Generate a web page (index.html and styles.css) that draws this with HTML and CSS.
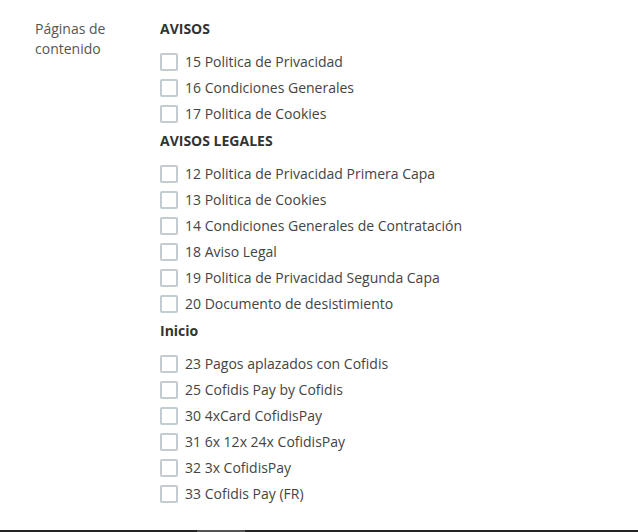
FILE: index.html
```html
<!DOCTYPE html>
<html lang="es">
<head>
<meta charset="utf-8">
<title>Páginas de contenido</title>
<link rel="stylesheet" href="styles.css">
</head>
<body>
<div class="page">
  <div class="field">
    <div class="field-label">Páginas de<br>contenido</div>
    <div class="field-body">
      <div class="group">
        <div class="group-title">AVISOS</div>
        <ul class="opts">
          <li class="opt"><span class="box"></span>15 Politica de Privacidad</li>
          <li class="opt"><span class="box"></span>16 Condiciones Generales</li>
          <li class="opt"><span class="box"></span>17 Politica de Cookies</li>
        </ul>
      </div>
      <div class="group">
        <div class="group-title">AVISOS LEGALES</div>
        <ul class="opts">
          <li class="opt"><span class="box"></span>12 Politica de Privacidad Primera Capa</li>
          <li class="opt"><span class="box"></span>13 Politica de Cookies</li>
          <li class="opt"><span class="box"></span>14 Condiciones Generales de Contratación</li>
          <li class="opt"><span class="box"></span>18 Aviso Legal</li>
          <li class="opt"><span class="box"></span>19 Politica de Privacidad Segunda Capa</li>
          <li class="opt"><span class="box"></span>20 Documento de desistimiento</li>
        </ul>
      </div>
      <div class="group">
        <div class="group-title">Inicio</div>
        <ul class="opts">
          <li class="opt"><span class="box"></span>23 Pagos aplazados con Cofidis</li>
          <li class="opt"><span class="box"></span>25 Cofidis Pay by Cofidis</li>
          <li class="opt"><span class="box"></span>30 4xCard CofidisPay</li>
          <li class="opt"><span class="box"></span>31 6x 12x 24x CofidisPay</li>
          <li class="opt"><span class="box"></span>32 3x CofidisPay</li>
          <li class="opt"><span class="box"></span>33 Cofidis Pay (FR)</li>
        </ul>
      </div>
    </div>
  </div>
</div>
<div class="bottombar"><div class="thumb"></div></div>
</body>
</html>
```

FILE: styles.css
```css
html, body {
  margin: 0;
  padding: 0;
  background: #fff;
}
body {
  font-family: "Open Sans", "Liberation Sans", sans-serif;
  font-size: 14px;
  color: #444;
  height: 532px;
  overflow: hidden;
  display: flex;
  flex-direction: column;
}
.page {
  flex: 1;
  padding-top: 19px;
}
.field {
  display: flex;
}
.field-label {
  width: 125px;
  padding-left: 35px;
  line-height: 20px;
  color: #555;
}
.field-body {
  display: flex;
  flex-direction: column;
  gap: 4px;
}
.group-title {
  font-weight: 700;
  line-height: 20px;
  color: #333;
}
.opts {
  list-style: none;
  margin: 10px 0 0;
  padding: 0;
}
.opt {
  display: flex;
  align-items: center;
  height: 26px;
  line-height: 20px;
}
.box {
  box-sizing: border-box;
  width: 18px;
  height: 18px;
  border: 2px solid #c2ccd1;
  border-radius: 2px;
  margin-right: 7px;
  flex-shrink: 0;
}
.bottombar {
  height: 2px;
  background: #252525;
  position: relative;
}
.thumb {
  margin-left: 197px;
  width: 48px;
  height: 2px;
  background: #555;
}
```
